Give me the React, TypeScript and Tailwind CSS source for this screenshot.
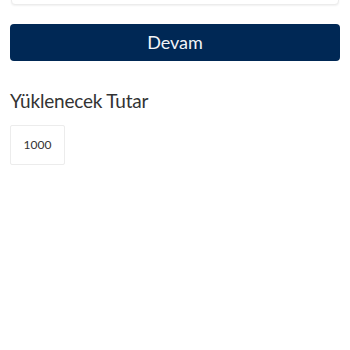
import React from "react";

export default function App() {
  return (
    <div className="w-[350px] h-[350px] bg-white px-[10px] flex flex-col" style={{ fontFamily: "Lato, 'Noto Sans', sans-serif" }}>
      <div className="-mt-[20px] h-[25px] mx-[1px] rounded-[4px] border border-[#ececec] shadow-[0_1px_2px_rgba(0,0,0,0.06)] bg-white" />
      <button className="mt-[19px] h-[37px] w-full rounded-[4px] bg-[#002855] text-[#f2f4f8] text-[18px] flex items-center justify-center">
        Devam
      </button>
      <div className="mt-[28px] text-[19px] leading-[24px] text-[#333] tracking-[-0.2px]">Yüklenecek Tutar</div>
      <div className="mt-[12px] w-[55px] h-[40px] border border-[#ececec] rounded-[2px] flex items-center justify-center text-[12px] text-[#333]">
        1000
      </div>
    </div>
  );
}
